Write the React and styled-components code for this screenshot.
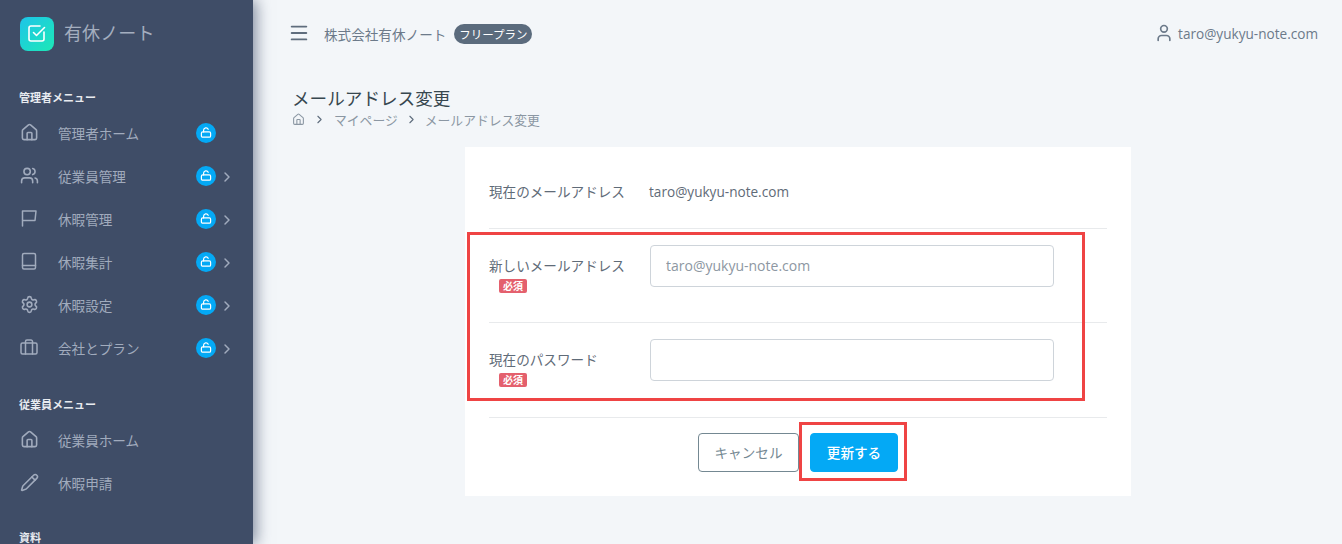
import styled, { createGlobalStyle } from "styled-components";
import { Home, Users, Settings, Pencil, ChevronRight, Menu, User } from "lucide-react";

const GlobalStyle = createGlobalStyle`
  html, body { margin: 0; padding: 0; height: 100%; overflow: hidden; }
  body {
    background: #f3f6f9;
    font-family: "Open Sans", "Noto Sans CJK JP", sans-serif;
  }
`;

const Layout = styled.div`
  display: flex;
  height: 544px;
  overflow: hidden;
`;

const Sidebar = styled.aside`
  flex: 0 0 253px;
  background: #3f4d67;
  box-shadow: 3px 0 14px rgba(50, 65, 95, 0.6);
  padding: 17px 0 0 20px;
  box-sizing: border-box;
  position: relative;
  z-index: 1;
  overflow: hidden;
`;

const Brand = styled.div`
  display: flex;
  align-items: center;
  gap: 10px;
  height: 34px;
  margin-bottom: 41px;
`;

const LogoMark = styled.div`
  width: 34px;
  height: 34px;
  border-radius: 8px;
  background: linear-gradient(135deg, #1dc4e9, #1de9b6);
  display: flex;
  align-items: center;
  justify-content: center;
  color: #fff;
  svg { margin-top: -3px; }
`;

const BrandName = styled.span`
  font-size: 18px;
  color: #a4aebf;
  letter-spacing: 0.1px;
  margin-top: -4px;
`;

const SectionTitle = styled.div`
  font-size: 11px;
  font-weight: 700;
  color: #e8ebf0;
  line-height: 16px;
  margin: ${(p) => p.$top || 0}px 0 5px -1px;
`;

const NavItem = styled.div`
  display: flex;
  align-items: center;
  height: 43px;
  color: #a1abbd;
  font-size: 13.6px;
`;

const NavIcon = styled.span`
  width: 38px;
  display: flex;
  align-items: center;
  margin-top: -1px;
  svg { display: block; }
`;

const NavLabel = styled.span`
  flex: 0 0 138px;
`;

const LockBadge = styled.span`
  width: 20px;
  height: 20px;
  border-radius: 50%;
  background: #04a9f5;
  display: flex;
  align-items: center;
  justify-content: center;
  color: #fff;
`;

const NavChevron = styled.span`
  display: flex;
  margin: 2px 0 0 3px;
  color: #a1abbd;
`;

const Main = styled.main`
  flex: 1;
  min-width: 0;
  padding: 0 24px 0 38px;
`;

const TopBar = styled.header`
  display: flex;
  align-items: center;
  height: 68px;
  color: #6c7a8a;
  font-size: 13.6px;
`;

const MenuButton = styled.span`
  display: flex;
  color: #5f6d7d;
  margin: -2px 14px 0 -3px;
`;

const PlanBadge = styled.span`
  margin-left: 8px;
  height: 20px;
  width: 78px;
  border-radius: 10px;
  background: #5b6b7d;
  color: #fff;
  font-size: 11.5px;
  display: flex;
  align-items: center;
  justify-content: center;
`;

const UserBox = styled.div`
  margin-left: auto;
  margin-top: -2px;
  display: flex;
  align-items: center;
  gap: 4px;
  font-size: 13.6px;
  color: #6c7a8a;
`;

const PageTitle = styled.h1`
  margin: 18px 0 0 1px;
  font-size: 17.6px;
  font-weight: 400;
  line-height: 24px;
  color: #37474f;
`;

const Breadcrumb = styled.nav`
  display: flex;
  align-items: center;
  height: 20px;
  margin: -1px 0 18px 1px;
  font-size: 12.8px;
  color: #8b97a3;
`;

const Crumb = styled.span`
  display: flex;
  align-items: center;
  color: ${(p) => p.$dark ? "#5f6d7d" : "inherit"};
  margin: 0 ${(p) => p.$gap || 0}px;
`;

const Card = styled.section`
  position: relative;
  width: 666px;
  height: 349px;
  margin-left: 174px;
  background: #fff;
  padding: 0 24px;
  box-sizing: border-box;
`;

const Row = styled.div`
  display: flex;
  height: ${(p) => p.$height}px;
  padding-top: ${(p) => p.$top}px;
  box-sizing: border-box;
  border-bottom: 1px solid #e8eaec;
  font-size: 13.6px;
  color: #5f6b78;
`;

const LabelColumn = styled.div`
  flex: 0 0 161px;
`;

const FieldLabel = styled.div`
  line-height: 20px;
  padding-top: ${(p) => p.$top || 0}px;
`;

const Required = styled.span`
  display: block;
  width: 28px;
  height: 14px;
  margin: 3px 0 0 10px;
  border-radius: 2px;
  background: #e4606d;
  color: #fff;
  font-size: 10px;
  font-weight: 700;
  line-height: 14px;
  text-align: center;
`;

const Value = styled.div`
  line-height: 20px;
  font-size: 13.6px;
  margin-left: -1px;
`;

const Input = styled.input`
  width: 404px;
  height: 42px;
  padding: 0 15px 2px;
  box-sizing: border-box;
  border: 1px solid #ced4da;
  border-radius: 4px;
  background: #fff;
  font: inherit;
  font-size: 14px;
  outline: none;
  &::placeholder { color: #8d97a2; opacity: 1; }
`;

const Actions = styled.div`
  display: flex;
  justify-content: center;
  gap: 11px;
  padding-top: 15px;
`;

const Button = styled.button`
  height: 39px;
  width: ${(p) => p.$width}px;
  border-radius: 4px;
  border: 1px solid ${(p) => p.$primary ? "#04a9f5" : "#748892"};
  background: ${(p) => p.$primary ? "#04a9f5" : "#fff"};
  color: ${(p) => p.$primary ? "#fff" : "#748892"};
  font: inherit;
  font-size: 13.6px;
  font-weight: ${(p) => p.$primary ? 500 : 400};
  padding: 0 0 2px;
`;

const Highlight = styled.div`
  position: absolute;
  left: ${(p) => p.$left}px;
  top: ${(p) => p.$top}px;
  width: ${(p) => p.$width}px;
  height: ${(p) => p.$height}px;
  box-sizing: border-box;
  border: 3px solid #ef4444;
  pointer-events: none;
`;

const LockIcon = () => (
  <svg width="12" height="12" viewBox="0 0 12 12" fill="none" stroke="currentColor" strokeWidth="1.2">
    <rect x="1.4" y="4.9" width="9.2" height="5.3" rx="1.3" />
    <path d="M3.6 4.9V3.1a2.4 2.4 0 0 1 4.6-.8" strokeLinecap="round" />
  </svg>
);

const NavSvg = ({ children }) => (
  <svg width="18" height="18" viewBox="0 0 18 18" fill="none" stroke="currentColor" strokeWidth="1.5" strokeLinejoin="round" strokeLinecap="round">
    {children}
  </svg>
);

const FlagIcon = () => (
  <NavSvg>
    <path d="M2.5 17V2h13.5l-1 9.5H2.5" />
  </NavSvg>
);

const BookIcon = () => (
  <NavSvg>
    <rect x="2.5" y="1.5" width="13" height="15.5" rx="1.5" />
    <path d="M2.5 13.5h13" />
  </NavSvg>
);

const CaseIcon = () => (
  <NavSvg>
    <rect x="1" y="5" width="16" height="11" rx="1.5" />
    <path d="M5.5 16V3.5a1.5 1.5 0 0 1 1.5-1.5h4a1.5 1.5 0 0 1 1.5 1.5V16" />
  </NavSvg>
);

const LogoIcon = () => (
  <svg width="20" height="20" viewBox="0 0 20 20" fill="none" stroke="currentColor" strokeWidth="1.6" strokeLinecap="round" strokeLinejoin="round">
    <path d="M17 9v7a2 2 0 0 1-2 2H4a2 2 0 0 1-2-2V5a2 2 0 0 1 2-2h9" />
    <path d="M6.5 9.5l3 3 8-8" />
  </svg>
);

const adminItems = [
  { icon: <Home size={19} strokeWidth={2} />, label: "管理者ホーム" },
  { icon: <Users size={19} strokeWidth={2} />, label: "従業員管理", more: true },
  { icon: <FlagIcon />, label: "休暇管理", more: true },
  { icon: <BookIcon />, label: "休暇集計", more: true },
  { icon: <Settings size={19} strokeWidth={2} />, label: "休暇設定", more: true },
  { icon: <CaseIcon />, label: "会社とプラン", more: true },
];

const employeeItems = [
  { icon: <Home size={19} strokeWidth={2} />, label: "従業員ホーム" },
  { icon: <Pencil size={19} strokeWidth={2} />, label: "休暇申請" },
];

const App = () => {
  return (
    <Layout>
      <GlobalStyle />
      <Sidebar>
        <Brand>
          <LogoMark><LogoIcon /></LogoMark>
          <BrandName>有休ノート</BrandName>
        </Brand>
        <SectionTitle $top={-2}>管理者メニュー</SectionTitle>
        {adminItems.map((item) => (
          <NavItem key={item.label}>
            <NavIcon>{item.icon}</NavIcon>
            <NavLabel>{item.label}</NavLabel>
            <LockBadge><LockIcon /></LockBadge>
            {item.more && <NavChevron><ChevronRight size={16} strokeWidth={2.2} /></NavChevron>}
          </NavItem>
        ))}
        <SectionTitle $top={28}>従業員メニュー</SectionTitle>
        {employeeItems.map((item) => (
          <NavItem key={item.label}>
            <NavIcon>{item.icon}</NavIcon>
            <NavLabel>{item.label}</NavLabel>
          </NavItem>
        ))}
        <SectionTitle $top={26}>資料</SectionTitle>
      </Sidebar>
      <Main>
        <TopBar>
          <MenuButton><Menu size={22} strokeWidth={2} /></MenuButton>
          <span>株式会社有休ノート</span>
          <PlanBadge>フリープラン</PlanBadge>
          <UserBox>
            <User size={20} strokeWidth={2} />
            <span>taro@yukyu-note.com</span>
          </UserBox>
        </TopBar>
        <PageTitle>メールアドレス変更</PageTitle>
        <Breadcrumb>
          <Crumb><Home size={13} /></Crumb>
          <Crumb $gap={8} $dark><ChevronRight size={13} /></Crumb>
          <span>マイページ</span>
          <Crumb $gap={7} $dark><ChevronRight size={13} /></Crumb>
          <span>メールアドレス変更</span>
        </Breadcrumb>
        <Card>
          <Row $height={82} $top={35}>
            <LabelColumn><FieldLabel>現在のメールアドレス</FieldLabel></LabelColumn>
            <Value>taro@yukyu-note.com</Value>
          </Row>
          <Row $height={94} $top={16}>
            <LabelColumn>
              <FieldLabel $top={11}>新しいメールアドレス</FieldLabel>
              <Required>必須</Required>
            </LabelColumn>
            <Input placeholder="taro@yukyu-note.com" />
          </Row>
          <Row $height={95} $top={16}>
            <LabelColumn>
              <FieldLabel $top={11}>現在のパスワード</FieldLabel>
              <Required>必須</Required>
            </LabelColumn>
            <Input type="password" />
          </Row>
          <Actions>
            <Button $width={101}>キャンセル</Button>
            <Button $primary $width={88}>更新する</Button>
          </Actions>
          <Highlight $left={2} $top={85} $width={618} $height={169} />
          <Highlight $left={334} $top={275} $width={108} $height={59} />
        </Card>
      </Main>
    </Layout>
  );
};

export default App;
